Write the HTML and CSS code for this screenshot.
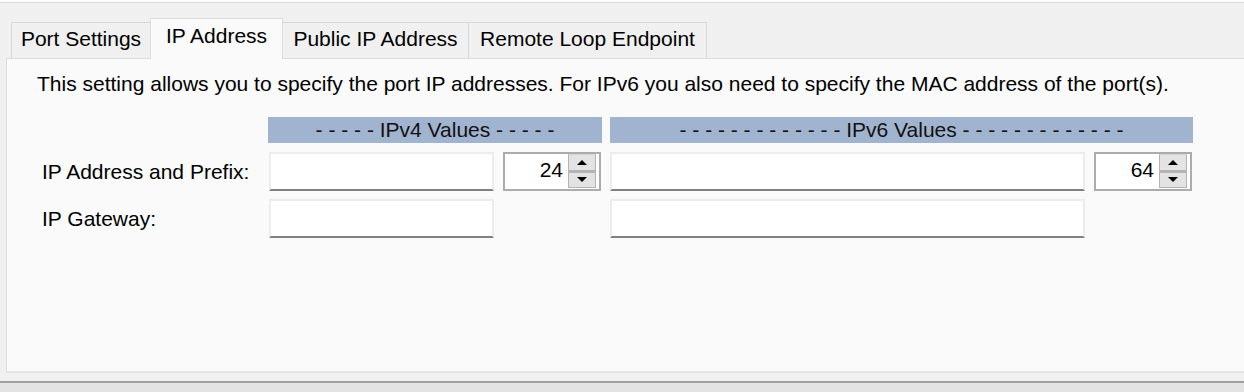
FILE: index.html
```html
<!DOCTYPE html>
<html lang="en">
<head>
    <meta charset="UTF-8">
    <title>IP Address</title>
    <link rel="stylesheet" href="styles.css">
</head>
<body>
    <div class="topline"></div>

    <div class="tabs">
        <div class="tab tab-port">Port Settings</div>
        <div class="tab tab-ip active">IP Address</div>
        <div class="tab tab-public">Public IP Address</div>
        <div class="tab tab-remote">Remote Loop Endpoint</div>
    </div>

    <div class="panel">
        <p class="hint">This setting allows you to specify the port IP addresses. For IPv6 you also need to specify the MAC address of the port(s).</p>

        <div class="fields">
            <div></div>
            <div class="group-head v4">- - - - - IPv4 Values - - - - -</div>
            <div class="group-head v6">- - - - - - - - - - - - - IPv6 Values - - - - - - - - - - - - -</div>

            <label class="field-label">IP Address and Prefix:</label>
            <input class="text-box" type="text">
            <div class="spin">
                <span class="spin-value">24</span>
                <div class="spin-buttons">
                    <span class="spin-btn up"></span>
                    <span class="spin-btn down"></span>
                </div>
            </div>
            <input class="text-box" type="text">
            <div class="spin">
                <span class="spin-value">64</span>
                <div class="spin-buttons">
                    <span class="spin-btn up"></span>
                    <span class="spin-btn down"></span>
                </div>
            </div>

            <label class="field-label">IP Gateway:</label>
            <input class="text-box" type="text">
            <div></div>
            <input class="text-box" type="text">
        </div>
    </div>

    <div class="statusbar"></div>
</body>
</html>
```

FILE: styles.css
```css
body {
    margin: 0;
    height: 392px;
    overflow: hidden;
    background-color: #f0f0f0;
    font-family: "Liberation Sans", Arial, sans-serif;
    font-size: 21px;
    line-height: 24px;
    color: #000;
}
.topline {
    height: 2px;
    background-color: #fcfcfc;
    border-bottom: 1px solid #dadada;
}

/* tab strip */
.tabs {
    display: flex;
    align-items: flex-end;
    margin-top: 15px;
    padding-left: 11px;
    height: 40px;
}
.tab {
    box-sizing: border-box;
    height: 36px;
    padding-top: 4px;
    text-align: center;
    white-space: nowrap;
    background-color: #f0f0f0;
    border: 1px solid #d9d9d9;
    border-bottom: none;
}
.tab.active {
    position: relative;
    z-index: 1;
    height: 41px;
    margin-bottom: -1px;
    padding-top: 5px;
    background-color: #fafafa;
    border-color: #dcdcdc;
}
.tab-port { width: 139px; border-right: none; }
.tab-ip { width: 133px; }
.tab-public { width: 185px; border-left: none; border-right: none; }
.tab-remote { width: 239px; }

/* page body */
.panel {
    box-sizing: border-box;
    height: 315px;
    margin-left: 6px;
    padding: 13px 0 0 30px;
    background-color: #fafafa;
    border: 1px solid #dcdcdc;
    border-bottom: 2px solid #e3e3e3;
    border-right: none;
}
.hint {
    margin: 0;
    white-space: nowrap;
}
.fields {
    display: grid;
    grid-template-columns: 218px 225px 98px 475px 98px;
    grid-template-rows: 27px 39px 39px;
    column-gap: 9px;
    row-gap: 8px;
    margin: 21px 0 0 5px;
}
.group-head {
    height: 26px;
    line-height: 25px;
    margin: 0 -1px;
    text-align: center;
    white-space: nowrap;
    background-color: #a1b4cf;
    color: #111;
}
.v4 { grid-column: 2 / 4; }
.v6 { grid-column: 4 / 6; margin-left: 0; }
.field-label {
    align-self: center;
    white-space: nowrap;
}
.text-box {
    box-sizing: border-box;
    width: 100%;
    height: 39px;
    margin: 0;
    background-color: #fff;
    border: 2px solid #ececec;
    border-bottom-color: #808080;
    font: inherit;
}

/* numeric up/down */
.spin {
    box-sizing: border-box;
    display: flex;
    height: 39px;
    background-color: #fff;
    border: 2px solid #acacac;
}
.spin-value {
    flex: 1;
    align-self: center;
    text-align: right;
    padding-right: 5px;
    margin-top: -3px;
}
.spin-buttons {
    display: flex;
    flex-direction: column;
    width: 28px;
    margin: 0 3px 1px 0;
}
.spin-btn {
    flex: 1;
    display: flex;
    align-items: center;
    justify-content: center;
    background-color: #e3e3e3;
    border: 1px solid #b4b4b4;
    border-top-color: #d6d6d6;
}
.spin-btn.down {
    border-top: 2px solid #b4b4b4;
}
.spin-btn::before {
    content: "";
    border-left: 5px solid transparent;
    border-right: 5px solid transparent;
}
.spin-btn.up::before {
    border-bottom: 5px solid #000;
}
.spin-btn.down::before {
    border-top: 5px solid #000;
}

.statusbar {
    height: 20px;
    margin-top: 8px;
    background-color: #e3e3e3;
    border-top: 2px solid #a0a0a0;
}
```
